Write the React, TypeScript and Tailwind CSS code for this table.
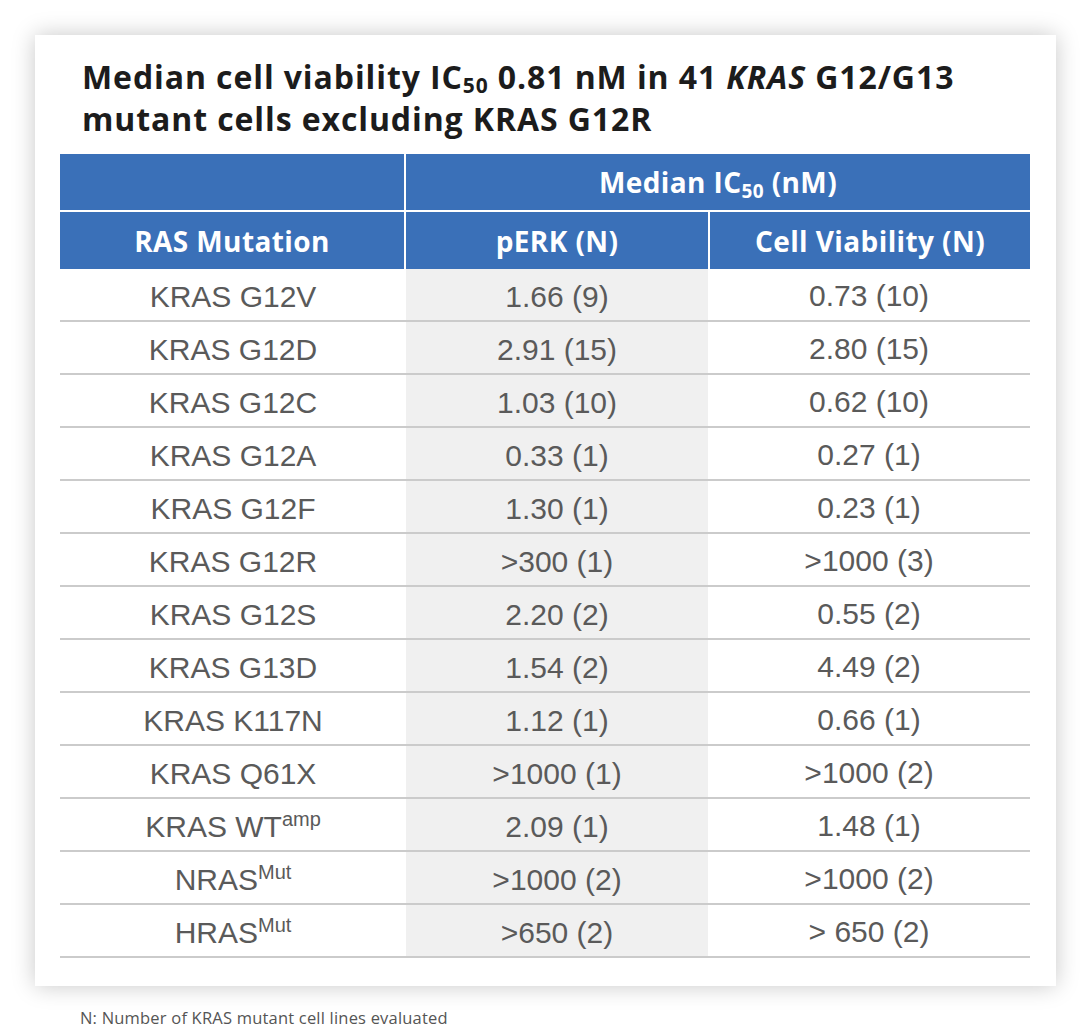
import React from 'react';

type Row = { name: React.ReactNode; perk: string; cv: string };

const Sup = ({ children }: { children: React.ReactNode }) => (
  <sup className="text-[20px] leading-none relative -top-[11px]">{children}</sup>
);

const rows: Row[] = [
  { name: 'KRAS G12V', perk: '1.66 (9)', cv: '0.73 (10)' },
  { name: 'KRAS G12D', perk: '2.91 (15)', cv: '2.80 (15)' },
  { name: 'KRAS G12C', perk: '1.03 (10)', cv: '0.62 (10)' },
  { name: 'KRAS G12A', perk: '0.33 (1)', cv: '0.27 (1)' },
  { name: 'KRAS G12F', perk: '1.30 (1)', cv: '0.23 (1)' },
  { name: 'KRAS G12R', perk: '>300 (1)', cv: '>1000 (3)' },
  { name: 'KRAS G12S', perk: '2.20 (2)', cv: '0.55 (2)' },
  { name: 'KRAS G13D', perk: '1.54 (2)', cv: '4.49 (2)' },
  { name: 'KRAS K117N', perk: '1.12 (1)', cv: '0.66 (1)' },
  { name: 'KRAS Q61X', perk: '>1000 (1)', cv: '>1000 (2)' },
  { name: <>KRAS WT<Sup>amp</Sup></>, perk: '2.09 (1)', cv: '1.48 (1)' },
  { name: <>NRAS<Sup>Mut</Sup></>, perk: '>1000 (2)', cv: '>1000 (2)' },
  { name: <>HRAS<Sup>Mut</Sup></>, perk: '>650 (2)', cv: '> 650 (2)' },
];

export default function App() {
  return (
    <div className="w-[1088px] h-[1031px] bg-white font-['Liberation_Sans',sans-serif]">
      <div className="pt-[35px] pl-[35px]">
        {/* card */}
        <div className="w-[1021px] h-[951px] bg-white shadow-[0_0_22px_rgba(0,0,0,0.22)] pt-[21px]">
          <h1 className="pl-[47px] text-[32px] leading-[42px] font-bold text-[#1c1c1c] font-['Open_Sans',sans-serif] tracking-[0.9px]">
            Median cell viability IC<sub className="text-[21px] leading-none relative top-[4px]">50</sub> 0.81 nM in 41{' '}
            <i>KRAS</i> G12/G13
            <br />
            mutant cells excluding KRAS G12R
          </h1>

          <div className="mx-[25px] mt-[14px] w-[970px]">
            {/* header */}
            <div className="grid grid-cols-[344px_624px] gap-x-[2px] text-white font-['Open_Sans',sans-serif] font-bold text-[28px] tracking-[0.4px]">
              <div className="h-[56px] bg-[#3a70b8]" />
              <div className="h-[56px] bg-[#3a70b8] flex items-center justify-center">
                <span>
                  Median IC<sub className="text-[19px] leading-none relative top-[5px]">50</sub> (nM)
                </span>
              </div>
            </div>
            <div className="h-[2px] bg-white" />
            <div className="grid grid-cols-[344px_302px_320px] gap-x-[2px] text-white font-['Open_Sans',sans-serif] font-bold text-[28px] tracking-[0.4px]">
              <div className="h-[57px] bg-[#3a70b8] flex items-center justify-center">RAS Mutation</div>
              <div className="h-[57px] bg-[#3a70b8] flex items-center justify-center">pERK (N)</div>
              <div className="h-[57px] bg-[#3a70b8] flex items-center justify-center">Cell Viability (N)</div>
            </div>

            {/* body */}
            {rows.map((r, i) => (
              <div
                key={i}
                className="grid grid-cols-[346px_302px_322px] h-[53px] border-b-2 border-[#cbcbcb] text-[30px] text-[#5a5a5a]"
              >
                <div className="flex items-center justify-center pt-[4px]">
                  <span>{r.name}</span>
                </div>
                <div className="flex items-center justify-center bg-[#f0f0f0] pt-[4px]">{r.perk}</div>
                <div className="flex items-center justify-center pt-[1px]">{r.cv}</div>
              </div>
            ))}
          </div>
        </div>
      </div>
      <p className="pl-[80px] pt-[22px] text-[16.5px] leading-[20px] tracking-[0.2px] text-[#555] font-['Open_Sans',sans-serif]">
        N: Number of KRAS mutant cell lines evaluated
      </p>
    </div>
  );
}
